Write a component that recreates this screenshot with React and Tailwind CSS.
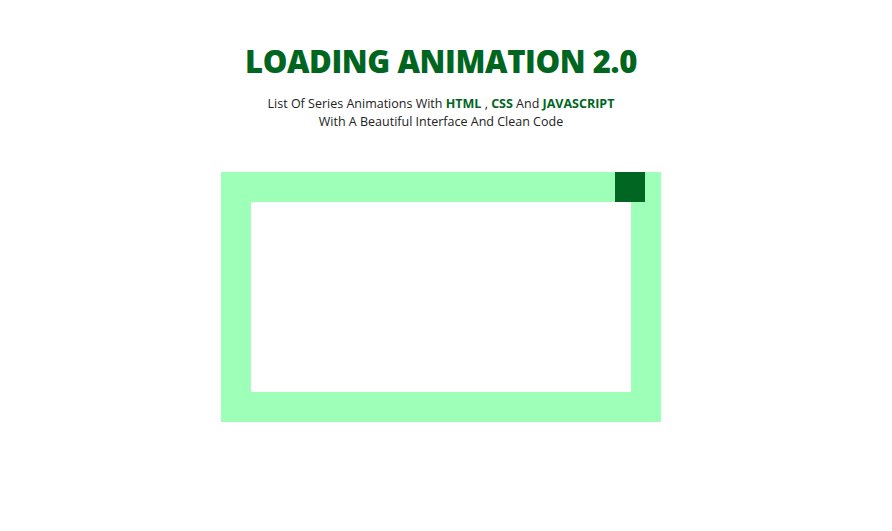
export default function App() {
  return (
    <div className="min-h-[531px] w-full bg-white pr-[10px] font-['Open_Sans',sans-serif]">
      <div className="flex flex-col items-center pt-[40px]">
        <h1 className="text-[31px] font-extrabold leading-[42px] tracking-[-0.4px] text-[#00661f]">
          LOADING ANIMATION 2.0
        </h1>
        <p className="mt-[13px] text-center text-[12.5px] leading-[18px] text-[#222]">
          List Of Series Animations With <b className="text-[#00661f]">HTML</b> , <b className="text-[#00661f]">CSS</b> And{" "}
          <b className="text-[#00661f]">JAVASCRIPT</b>
          <br />
          With A Beautiful Interface And Clean Code
        </p>
        <div className="mt-[41px] w-[440px] h-[250px] bg-[#9effb9] p-[30px]">
          <div className="relative h-full w-full bg-white">
            <div className="absolute -top-[30px] right-[-14px] h-[30px] w-[30px] bg-[#006622]" />
          </div>
        </div>
      </div>
    </div>
  );
}
